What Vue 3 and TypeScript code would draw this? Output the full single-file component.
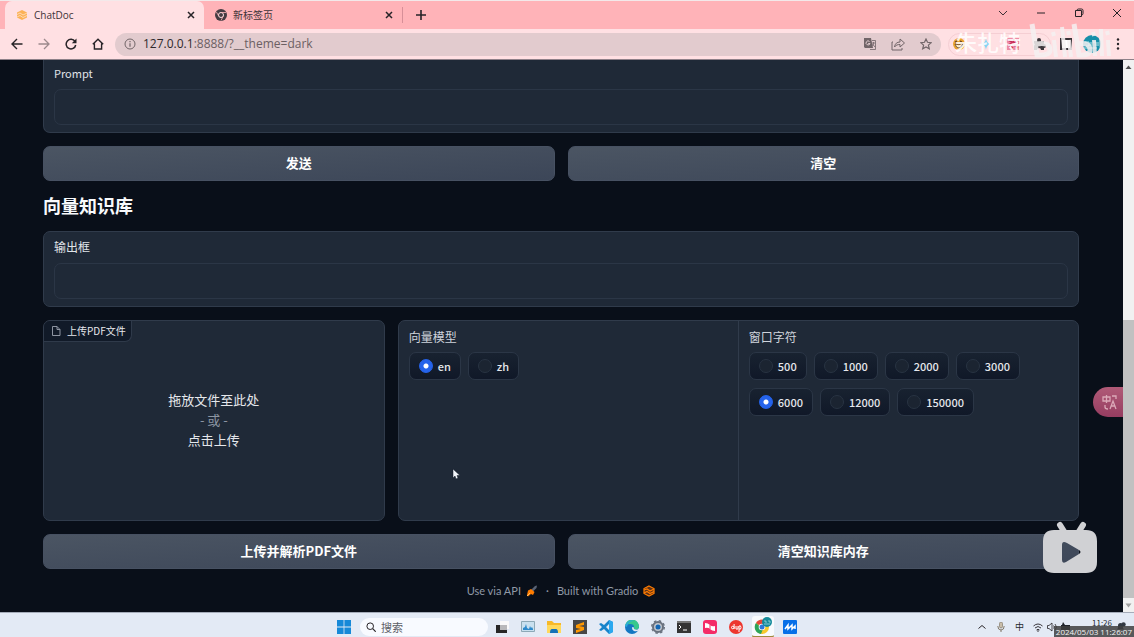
<script setup lang="ts">
import { ref } from 'vue'

const prompt = ref('')
const output = ref('')
const model = ref('en')
const windowSize = ref('6000')
const models: string[] = ['en', 'zh']
const windowSizes: string[] = ['500', '1000', '2000', '3000', '6000', '12000', '150000']
</script>

<template>
  <div class="screen">
    <header class="tabs">
      <div class="tab active">
        <svg class="i12" viewBox="0 0 12 12"><path d="M6 1 11 3.500v5L6 11 1 8.500v-5z" fill="#fbb257" /><path d="M1 5.500 4 4l3 2 4-2M1 8l3-1.500 3 2 4-2" fill="none" stroke="#ffe1cc" stroke-width=".8" /></svg>
        <span class="tab-title">ChatDoc</span>
        <button class="icon-btn" aria-label="关闭标签页"><svg class="i10" viewBox="0 0 10 10"><path d="m2 2 6 6M8 2 2 8" class="ln" stroke-width="1.500" /></svg></button>
      </div>
      <div class="tab">
        <svg class="i12" viewBox="0 0 12 12"><circle cx="6" cy="6" r="6" fill="#443b42" /><circle cx="6" cy="6" r="2.500" fill="#443b42" stroke="#ffe3e6" stroke-width="1" /><path d="M6 3.500h5M3.800 7.200 1.400 3M8.200 7.200 6 11.500" stroke="#ffb5ba" stroke-width=".8" /></svg>
        <span class="tab-title">新标签页</span>
        <button class="icon-btn" aria-label="关闭标签页"><svg class="i10" viewBox="0 0 10 10"><path d="m2 2 6 6M8 2 2 8" class="ln" stroke-width="1.500" /></svg></button>
      </div>
      <button class="icon-btn new-tab" aria-label="新建标签页"><svg class="i12" viewBox="0 0 12 12"><path d="M6 1v10M1 6h10" class="ln" stroke-width="1.600" /></svg></button>
      <div class="window-controls">
        <button class="icon-btn" aria-label="搜索标签页"><svg class="i10" viewBox="0 0 10 10"><path d="m1 3 4 4 4-4" class="ln" stroke-width=".9" /></svg></button>
        <button class="icon-btn" aria-label="最小化"><svg class="i10" viewBox="0 0 10 10"><path d="M1 5h8" class="ln" /></svg></button>
        <button class="icon-btn" aria-label="还原"><svg class="i10" viewBox="0 0 10 10"><path d="M1.500 2.500h6v6h-6zM3 2.500q0-1.500 1.500-1.500H7.500Q9 1 9 2.500v3Q9 7 7.500 7" class="ln" /></svg></button>
        <button class="icon-btn" aria-label="关闭"><svg class="i10" viewBox="0 0 10 10"><path d="m1 1 8 8M9 1 1 9" class="ln" /></svg></button>
      </div>
    </header>

    <nav class="toolbar">
      <div class="nav-buttons">
        <button class="icon-btn" aria-label="后退"><svg class="i12" viewBox="0 0 12 12"><path d="M11.500 6H1M6 1 1 6l5 5" class="ln" stroke-width="1.400" /></svg></button>
        <button class="icon-btn faded" aria-label="前进"><svg class="i12" viewBox="0 0 12 12"><path d="M.5 6H11M6 1l5 5-5 5" class="ln" stroke-width="1.300" /></svg></button>
        <button class="icon-btn" aria-label="刷新"><svg class="i12" viewBox="0 0 12 12"><path d="M10 3.500A4.800 4.800 0 1 0 10.700 7" class="ln" stroke-width="1.500" /><path d="M11.500.5v4.700H6.800z" fill="#272327" /></svg></button>
        <button class="icon-btn" aria-label="主页"><svg class="i12" viewBox="0 0 12 12"><path d="M.8 6.300 6 1.200l5.200 5.100M2.400 5.500V11h7.200V5.500" class="ln" stroke-width="1.400" /></svg></button>
      </div>
      <div class="address">
        <svg class="i12" viewBox="0 0 12 12"><circle cx="6" cy="6" r="5" class="ln soft" /><path d="M6 5.200v3.500M6 3v1.200" class="ln soft" stroke-width="1.200" /></svg>
        <span class="url"><b>127.0.0.1</b>:8888/?__theme=dark</span>
        <button class="icon-btn" aria-label="翻译"><svg class="i12" viewBox="0 0 12 12"><path d="M0 0h7l2 10H1L0 9z" fill="#716568" /><path d="M8 2.500h3.500v9H6M8 5h3M9.500 4v1c0 2-1 3-2 3.500M8.500 6l2.500 3" class="ln soft" stroke-width=".8" /><path d="M5.500 3.500A2 2 0 1 0 6 5.500H4.200" fill="none" stroke="#e2cdd0" stroke-width="1" /></svg></button>
        <button class="icon-btn" aria-label="分享"><svg class="i14" viewBox="0 0 14 14"><path d="M2 5H1v8h10v-2M3.500 10C4 6.500 6 5 9 5V2l4.500 4L9 10V7.500C6.500 7.500 5 8 3.500 10z" class="ln soft" stroke-width="1" /></svg></button>
        <button class="icon-btn" aria-label="收藏"><svg class="i12" viewBox="0 0 12 12"><path d="m6 1 1.500 3.300 3.700.4-2.800 2.400.9 3.600L6 8.900l-3.300 1.800.9-3.600L.8 4.700l3.700-.4z" class="ln soft" stroke-width="1.200" /></svg></button>
      </div>
      <div class="extensions">
        <div class="pinned">
          <svg class="i12" viewBox="0 0 12 12"><circle cx="6" cy="6" r="6" fill="#e9a32e" /><path d="m2 4 2-1M7 3l2 1" fill="none" stroke="#614024" stroke-width="1.200" /><path d="M2 6q4 2 8-1-1 5-4 5T2 6" fill="#fff0d0" stroke="#614024" stroke-width=".8" /></svg>
          <svg class="i12" viewBox="0 0 12 12"><path d="M6 0c.5 4 2 5.500 5 6-3 .5-4.500 2-5 6-.5-4-2-5.500-5-6 3-.5 4.500-2 5-6" fill="#83d5f4" /></svg>
          <svg class="i12" viewBox="0 0 12 12"><path d="M0 0h12v12H0z" fill="#ed8ba5" /><path d="m1 2 4 2-3 3 4 3M7 1 6 5l5-1M7 7l4 3" stroke="#c92f5b" fill="none" stroke-width="1.500" /><path d="m8 1 3 4-6 1-2 4" stroke="#fff" fill="none" /></svg>
          <svg class="i12" viewBox="0 0 12 12"><path d="M0 3h3V2a2 2 0 0 1 4 0v1h3v3a2 2 0 0 1 0 4v2H7a2 2 0 0 0-4 0H0V8a2 2 0 0 0 0-3z" fill="#3c373b" /></svg>
        </div>
        <svg class="i12" viewBox="0 0 12 12"><path d="M1 1h10v10H1z" fill="#fff" stroke="#373337" stroke-width="2" /></svg>
        <svg class="i18" viewBox="0 0 18 18"><circle cx="9" cy="9" r="9" fill="#178fa9" /><path d="M2 7h4v4H3m5-4v4m2-4h3v4m2-4v4M1 13h13" fill="none" stroke="#b5e5e8" stroke-width="1" /></svg>
        <button class="icon-btn" aria-label="菜单"><svg class="i12" viewBox="0 0 12 12"><g fill="#272327"><circle cx="6" cy="1.500" r="1.200" /><circle cx="6" cy="6" r="1.200" /><circle cx="6" cy="10.500" r="1.200" /></g></svg></button>
      </div>
      <div class="watermark" aria-hidden="true">
        <span>朱扎特</span>
        <svg viewBox="0 0 84 36"><g fill="none" stroke="#f5f1f2" stroke-width="5"><path d="m4 1 5 31q14 1 13-6t-13-5M46 1l5 31q12 1 11-6t-12-5" /><path d="m26 17 2 17M34 4l3 30M41 17l2 17M66 17l1 16M73 6l1 27M80 17l1 16" stroke-width="4" /><path d="m25 9 1 4M40 8l1 4M65 9l1 4M79 8l1 4" stroke-width="4" /></g></svg>
      </div>
    </nav>

    <div class="viewport">
      <main class="page">
        <section class="card first">
          <label for="prompt" class="latin">Prompt</label>
          <textarea id="prompt" v-model="prompt" rows="1"></textarea>
        </section>
        <div class="row">
          <button class="action">发送</button>
          <button class="action">清空</button>
        </div>
        <h1>向量知识库</h1>
        <section class="card">
          <label for="output">输出框</label>
          <textarea id="output" v-model="output" rows="1"></textarea>
        </section>
        <div class="row panels">
          <section class="upload">
            <div class="upload-label">
              <svg class="i10" viewBox="0 0 10 10"><path d="M1.500.5h4.500l3 3v6h-7.500zM6 .5v3h3" fill="none" stroke="#9ca3af" stroke-width=".9" /></svg>
              <span>上传PDF文件</span>
            </div>
            <button class="drop">
              <span>拖放文件至此处</span>
              <span class="or">- 或 -</span>
              <span>点击上传</span>
            </button>
          </section>
          <div class="options">
            <fieldset>
              <legend>向量模型</legend>
              <div class="choices">
                <label v-for="m in models" :key="m" class="choice"><input v-model="model" type="radio" name="model" :value="m" /><span>{{ m }}</span></label>
              </div>
            </fieldset>
            <fieldset>
              <legend>窗口字符</legend>
              <div class="choices">
                <label v-for="s in windowSizes" :key="s" class="choice"><input v-model="windowSize" type="radio" name="window-size" :value="s" /><span>{{ s }}</span></label>
              </div>
            </fieldset>
          </div>
        </div>
        <div class="row">
          <button class="action">上传并解析PDF文件</button>
          <button class="action">清空知识库内存</button>
        </div>
        <footer>
          <a href="#api">Use via API <svg class="i12" viewBox="0 0 12 12"><path d="m4 6 5-5 2-.5L10.500 3l-5 5z" fill="#596274" /><path d="M2 5.500 5 4l3.500 3L7 10l-2-1-3 2.500L1 10z" fill="#ff7c00" /><path d="m1 11 3-3" stroke="#ffc267" /></svg></a>
          <span>·</span>
          <a href="#gradio">Built with Gradio <svg class="i12" viewBox="0 0 12 12"><path d="m6 1 5 2.500v5L6 11 1 8.500v-5z" fill="#5b3016" stroke="#ff7c00" stroke-width="1.200" /><path d="m1 5 3-1 3 2 4-2M1 8l3-1.500 3 2 4-2" fill="none" stroke="#ff7c00" stroke-width="1.200" /></svg></a>
        </footer>
      </main>
      <div class="scrollbar" aria-hidden="true">
        <svg class="arrow" viewBox="0 0 11 11"><path d="m5.500 4 3 3.500h-6z" fill="#505050" /></svg>
        <div class="track"><div class="thumb"></div></div>
        <svg class="arrow" viewBox="0 0 11 11"><path d="m5.500 8-3-4h6z" fill="#a0a0a0" /></svg>
      </div>
      <svg class="cursor" viewBox="0 0 8 12"><path d="M1 1v9l2-2 1 3 2-1-1-2.500h3z" fill="#f2f5fa" stroke="#111827" stroke-width=".5" /></svg>
      <button class="translate" aria-label="翻译网页"><svg class="i16" viewBox="0 0 16 16"><g fill="none" stroke="#dba9b8" stroke-width="1.300"><path d="M1 3h7v4H1zM4.500 1v8M10 2h4v3M3 11v2q0 2 3 2M8 15l3-8 3 8M9 12h4" /></g></svg></button>
      <svg class="tv" viewBox="0 0 54 53"><path d="m17 4 5 8m18-8-5 8" stroke="#d0d1d4" stroke-width="6" stroke-linecap="round" /><path fill-rule="evenodd" d="M11 9h32q11 0 11 11v21q0 11-11 11H11Q0 52 0 41V20Q0 9 11 9m10 12q-2 0-2 3v15q0 4 4 2l13-8q3-2 0-4l-12-7q-2-1-3-1" fill="#d0d1d4" /></svg>
    </div>

    <footer class="taskbar">
      <div class="apps">
        <button class="icon-btn" aria-label="开始"><svg class="i14" viewBox="0 0 14 14"><path d="M0 0h6.600v6.600H0zM7.400 0H14v6.600H7.400zM0 7.400h6.600V14H0zM7.400 7.400H14V14H7.400z" fill="#1689d8" /></svg></button>
        <label class="search"><svg class="i10" viewBox="0 0 10 10"><circle cx="4.200" cy="4.200" r="3.300" class="ln" /><path d="m6.700 6.700 3 3" class="ln" stroke-width="1.200" /></svg><input type="search" placeholder="搜索" aria-label="搜索" /></label>
        <button class="icon-btn" aria-label="任务视图"><svg class="i14" viewBox="0 0 14 14"><path d="M5 1h9v8H5z" fill="#fafafa" /><path d="M1 5h4v5h7v3H1z" fill="#262626" /><path d="M5 5h7v5H5z" fill="#b9b9bb" /></svg></button>
        <button class="icon-btn" aria-label="监视器"><svg class="i14" viewBox="0 0 14 14"><path d="M.5 1.500h13v10H.5z" fill="#c9e0ef" stroke="#8da9b7" /><path d="M2 10V8l2-1 1-3 1 4 2 1 1-3 1 2 1-1 1 2v1z" fill="#2f8acb" /></svg></button>
        <button class="icon-btn running" aria-label="文件资源管理器"><svg class="i14" viewBox="0 0 14 14"><path d="M0 1h5l2 2h7v10H0z" fill="#f7b928" /><path d="M0 5h14v8H0z" fill="#ffd95c" /><path d="M3 13q0-4 2-4h4q2 0 2 4z" fill="#1271b8" /></svg></button>
        <button class="icon-btn running" aria-label="Sublime Text"><svg class="i14" viewBox="0 0 14 14"><path d="M0 0h14v14H0z" fill="#474747" /><path d="m11 2-8 3v3l5 1-5 1v3l8-3V7L6 6l5-1z" fill="#ff9800" /></svg></button>
        <button class="icon-btn running" aria-label="VS Code"><svg class="i14" viewBox="0 0 14 14"><path d="m10 0 4 2v10l-4 2-5-5-3 2-2-1 3-3-3-3 2-1 3 2zM7 7l3 3V4z" fill="#1683ca" fill-rule="evenodd" /><path d="m10 0 4 2v10l-4 2z" fill="#2aa8ef" /></svg></button>
        <button class="icon-btn running" aria-label="Edge"><svg class="i14" viewBox="0 0 14 14"><circle cx="7" cy="7" r="7" fill="#1377c2" /><path d="M0 6a7 7 0 0 1 14 1q-1 4-5 2 1-5-4-5-3 0-5 2" fill="#38c88c" /><path d="M0 6q3-7 10-5-7-1-8 6" fill="#2aa8df" /><path d="M9 9q4 2 5-1v2q-2 2-5 1-2-1-2-3 0-1 1-1 1 0 1 2" fill="#e3eaf5" /></svg></button>
        <button class="icon-btn running" aria-label="设置"><svg class="i14" viewBox="0 0 14 14"><circle cx="7" cy="7" r="5" fill="#c0c5cc" stroke="#68717e" stroke-width="2" /><circle cx="7" cy="7" r="6.300" fill="none" stroke="#68717e" stroke-width="1.400" stroke-dasharray="2.500 2.450" /><circle cx="7" cy="7" r="2.500" fill="#1266b4" /></svg></button>
        <button class="icon-btn running" aria-label="终端"><svg class="i14" viewBox="0 0 14 14"><path d="M0 1h14v12H0z" fill="#343434" /><path d="M0 1h14v2H0z" fill="#777" /><path d="m2 5 2 2-2 2m4 1h4" fill="none" stroke="#fff" /></svg></button>
        <button class="icon-btn running" aria-label="远程桌面"><svg class="i14" viewBox="0 0 14 14"><rect width="14" height="14" rx="3" fill="#f42b67" /><path d="M2 3q3 0 5 2 2 2 5 1v5q-3 0-5-2-2-2-5-1z" fill="#fff" /><path d="M7 5v4" stroke="#f42b67" /></svg></button>
        <button class="icon-btn running" aria-label="dop"><svg class="i14" viewBox="0 0 14 14"><circle cx="7" cy="7" r="7" fill="#ed362e" /><g fill="none" stroke="#fff" stroke-width="1"><circle cx="3.800" cy="7.500" r="1.300" /><path d="M5.100 4v5M7 6v3q2 1 2-1V6m1 6V6q2-1 2 1.500T10 9" /></g></svg></button>
        <button class="icon-btn current" aria-label="Chrome"><svg class="i18" viewBox="0 0 18 18"><circle cx="8" cy="10" r="7" fill="#f7c92d" /><path d="M8 10 2 6a7 7 0 0 1 12 0z" fill="#e4463b" /><path d="M2 6a7 7 0 0 0 5 11l2-5z" fill="#2ca45a" /><circle cx="8" cy="10" r="3.300" fill="#fff" /><circle cx="8" cy="10" r="2.500" fill="#2e77db" /><circle cx="13" cy="5" r="5" fill="#168b9b" /><path d="M10 4h2v2m2-2h2v2M10 7h6" stroke="#b4e2e8" fill="none" stroke-width=".7" /></svg></button>
        <button class="icon-btn running" aria-label="MobaXterm"><svg class="i14" viewBox="0 0 14 14"><rect width="14" height="14" rx="1" fill="#0870e8" /><path d="m2 9 3-4v4l4-4v4l3-3v3" fill="none" stroke="#fff" stroke-width="1.500" /></svg></button>
      </div>
      <div class="tray">
        <svg class="i10" viewBox="0 0 10 10"><path d="m1.500 6.500 3.500-3 3.500 3" class="ln" /></svg>
        <svg class="i10" viewBox="0 0 10 10"><rect x="3.500" y="0" width="3" height="6" rx="1.500" fill="#c9bda9" stroke="#827969" stroke-width=".7" /><path d="M1.800 4q0 4 3.200 4t3.200-4M5 8v2" fill="none" stroke="#827969" /></svg>
        <span>中</span>
        <div class="status">
          <svg class="i10" viewBox="0 0 10 10"><path d="M.5 4q4.500-4 9 0M2 6q3-3 6 0M3.500 8q1.500-1.500 3 0" class="ln" stroke-width=".9" /><circle cx="5" cy="9" r=".8" fill="#272327" /></svg>
          <svg class="i10" viewBox="0 0 10 10"><path d="M.5 3.500H2L5 1v8L2 6.500H.5zM6.500 3.500q1.500 1.500 0 3M8 2q3 3 0 6" class="ln" stroke-width=".8" /></svg>
          <svg class="i10" viewBox="0 0 10 10"><path d="M0 3h9v5H0z" fill="#20242b" /><path d="m2 0 2 3H1z" fill="#20242b" /></svg>
        </div>
        <time>11:26</time>
        <svg class="i10" viewBox="0 0 10 10"><path d="M1 7.500h7L7 6V3.500a2.500 2.500 0 0 0-5 0V6z" fill="#323942" /><circle cx="7.500" cy="2.500" r="2.200" fill="#323942" /></svg>
      </div>
      <time class="stamp">2024/05/03 11:26:07</time>
    </footer>
  </div>
</template>

<style>
html, body { margin: 0; overflow: hidden; }
</style>

<style scoped>
.screen { display: flex; flex-direction: column; height: 100vh; min-height: 400px; overflow: hidden; position: relative; font-family: "Noto Sans CJK SC", sans-serif; background: #090f19; }
* { box-sizing: border-box; }
svg { display: block; flex: none; }
button, input, textarea { font-family: inherit; }
.i10 { width: 10px; height: 10px; }
.i12 { width: 12px; height: 12px; }
.i14 { width: 14px; height: 14px; }
.i16 { width: 16px; height: 16px; }
.i18 { width: 18px; height: 18px; }
.ln { fill: none; stroke: #272327; }
.soft { stroke: #716568; }
.icon-btn { display: flex; align-items: center; justify-content: center; padding: 0; border: 0; background: none; flex: none; }
.faded { opacity: .45; }

.tabs { display: flex; flex: none; height: 29px; padding-left: 5px; background: #ffb3b8; border-top: 1px solid #f3e9ea; }
.tab { display: flex; align-items: center; gap: 6px; width: 199px; padding: 0 8px 0 11px; border-radius: 7px 7px 0 0; }
.tab + .tab { width: 198px; }
.tab.active { background: #ffe0e3; }
.tab-title { flex: 1; font-size: 10px; line-height: 16px; color: #403338; font-family: "Open Sans", "Noto Sans CJK SC", sans-serif; }
.new-tab { height: 16px; margin-top: 6px; padding-left: 12px; border-left: 1px solid #d78f98; }
.window-controls { display: flex; align-items: center; gap: 28px; margin-left: auto; padding: 0 12px 4px 0; }

.toolbar { display: flex; flex: none; align-items: center; gap: 7px; height: 31px; padding: 0 10px 0 11px; position: relative; background: #ffe0e3; border-bottom: 1px solid #8e8189; }
.nav-buttons { display: flex; gap: 15px; padding-right: 4px; }
.address { display: flex; flex: 1; align-items: center; gap: 15px; height: 23px; padding: 0 9px; border-radius: 12px; background: #e2cbce; }
.address .url { flex: 1; margin-left: -8px; font-family: "Open Sans", sans-serif; font-size: 12px; line-height: 20px; color: #6c6063; }
.url b { font-weight: 400; color: #2e292b; }
.extensions { display: flex; align-items: center; gap: 14px; }
.pinned { display: flex; align-items: center; gap: 15px; height: 23px; margin-right: -5px; padding: 0 4px; border: 1px solid #f5ced3; border-radius: 12px; }
.extensions .i18 { margin: 0 -3px; }
.watermark { display: flex; align-items: center; position: absolute; right: 22px; bottom: 0; pointer-events: none; opacity: .85; color: #fff; font-size: 22px; font-weight: 500; line-height: 28px; }
.watermark svg { width: 84px; height: 36px; margin-left: 7px; }

.viewport { display: flex; flex: 1; min-height: 0; position: relative; }
.page { flex: 1; min-width: 0; padding: 0 44px 0 43px; overflow: hidden; }
.card { padding: 6px 10px 7px; border: 1px solid #303b4b; border-radius: 7px; background: #1f2937; }
.card.first { padding-top: 4px; border-top: 0; border-radius: 0 0 7px 7px; }
.card label { display: block; margin-bottom: 7px; font-size: 12px; line-height: 18px; color: #e0e4e9; }
.card .latin { font-size: 11px; }
textarea { display: block; width: 100%; height: 36px; padding: 8px; border: 1px solid #2b3646; border-radius: 7px; outline: 0; resize: none; overflow: hidden; background: #1f2937; color: #f3f4f6; font-size: 12px; }
.row { display: flex; gap: 13px; margin-top: 13px; }
.action { flex: 1; height: 35px; padding: 0 0 2px; border: 1px solid #475162; border-radius: 7px; background: linear-gradient(to bottom right, #4b5563, #3c4658); color: #fff; font-size: 13px; font-weight: 700; line-height: 20px; }
h1 { margin: 10px 0 11px; font-size: 18px; font-weight: 700; line-height: 29px; color: #f8fafc; }
.panels { min-height: 201px; }
.upload { display: flex; flex: 1 0 0; flex-direction: column; align-items: flex-start; border: 1px solid #303b4b; border-radius: 7px; background: #1f2937; overflow: hidden; }
.upload-label { display: flex; align-items: center; gap: 6px; height: 21px; padding: 0 5px 0 7px; border-right: 1px solid #2f3a4a; border-bottom: 1px solid #2f3a4a; border-radius: 0 0 7px; background: #111a28; color: #e5e7eb; font-size: 10px; line-height: 16px; }
.drop { display: flex; flex: 1; flex-direction: column; align-items: center; align-self: stretch; justify-content: center; padding: 0 0 22px; border: 0; background: none; color: #e5e7eb; font-size: 13px; line-height: 20px; }
.or { color: #8d96a3; }
.options { display: flex; flex: 2 0 0; border: 1px solid #303b4b; border-radius: 7px; background: #1f2937; overflow: hidden; }
fieldset { flex: 1 0 0; min-width: 0; margin: 0; padding: 7px 10px; border: 0; }
fieldset + fieldset { border-left: 1px solid #303b4b; }
legend { float: left; width: 100%; margin-bottom: 6px; padding: 0; font-size: 12px; line-height: 18px; color: #cfd4dc; }
.choices { display: flex; flex-wrap: wrap; gap: 8px 7px; clear: both; }
.choice { display: flex; align-items: center; gap: 5px; height: 28px; padding: 0 9px; border: 1px solid #2b3646; border-radius: 7px; background: linear-gradient(#182230, #101828); color: #e5e7eb; font-size: 11px; font-weight: 500; line-height: 16px; }
.choice span { padding-bottom: 1px; }
.choice input { appearance: none; width: 14px; height: 14px; margin: 0; border: 1px solid #283342; border-radius: 50%; background: #1b2431; }
.choice input:checked { border-color: #2563eb; background: radial-gradient(circle, #fff 2px, #2563eb 3px); }
.page footer { display: flex; align-items: center; justify-content: center; gap: 8px; margin-top: 13px; font-family: Lato, "Noto Sans", sans-serif; font-size: 11px; line-height: 18px; color: #9099a6; }
.page footer a { display: flex; align-items: center; gap: 5px; color: inherit; text-decoration: none; }

.scrollbar { display: flex; flex: none; flex-direction: column; width: 11px; background: #f1f1f1; }
.arrow { width: 11px; height: 14px; }
.track { display: flex; flex: 1; align-items: flex-end; }
.thumb { width: 100%; height: 53%; background: #c1c1c1; }
.cursor { position: absolute; left: 452px; top: 408px; width: 8px; height: 12px; }
.translate { position: absolute; right: 11px; top: 327px; width: 30px; height: 30px; padding: 0 0 0 9px; border: 0; border-radius: 15px 0 0 15px; background: linear-gradient(#b05a77, #963d61); }
.tv { position: absolute; right: 37px; bottom: 38px; width: 54px; height: 53px; }

.taskbar { display: flex; flex: none; align-items: center; justify-content: flex-end; position: relative; height: 25px; padding-top: 3px; background: #e3eaf5; border-top: 1px solid #a5acb9; }
.apps { display: flex; align-items: center; gap: 12px; position: absolute; left: 50%; transform: translateX(-50%); }
.search { display: flex; align-items: center; gap: 5px; width: 128px; height: 18px; margin: 0 -5px 0 -3px; padding: 0 6px; border-radius: 9px; background: #f8faff; }
.search input { flex: 1; width: 0; padding: 0; border: 0; outline: 0; background: none; font-size: 11px; line-height: 16px; }
.search input::placeholder { color: #5c6068; opacity: 1; }
.running { position: relative; }
.running::after { content: ""; position: absolute; bottom: -4px; width: 5px; height: 1px; background: #8b919a; }
.current { width: 22px; height: 22px; margin: 0 -3px; border-radius: 3px; background: #f8fafd; border-bottom: 2px solid #a08a3e; }
.tray { display: flex; align-items: center; gap: 9px; padding-right: 8px; font-size: 9px; line-height: 12px; color: #272a30; }
.status { display: flex; gap: 4px; }
.tray time { margin: 0 -5px 8px 12px; font-size: 8px; line-height: 10px; }
.stamp { position: absolute; right: 0; bottom: 0; padding: 0 2px; background: rgb(64 64 64 / 85%); color: #f4f4f4; font-family: "Open Sans", sans-serif; font-size: 8px; line-height: 11px; }
</style>
